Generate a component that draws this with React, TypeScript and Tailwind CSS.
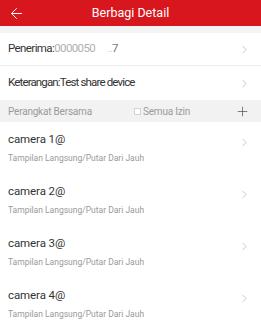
import React from 'react';
import { ChevronRight, ArrowLeft, Plus } from 'lucide-react';

const cameras = ['camera 1@', 'camera 2@', 'camera 3@', 'camera 4@'];

const Chevron = ({ className = '' }: { className?: string }) => (
  <ChevronRight size={13} strokeWidth={1.4} className={`text-[#b8b8b8] shrink-0 ${className}`} />
);

export default function App() {
  return (
    <div className="w-[261px] h-[320px] overflow-hidden bg-white" style={{ fontFamily: 'Roboto, "Noto Sans", sans-serif' }}>
      <div className="h-[26px] bg-[#d8161e] flex items-center relative">
        <ArrowLeft size={17} strokeWidth={1.4} className="text-white ml-[8px]" />
        <div className="absolute inset-0 flex items-center justify-center text-white text-[12.5px]">Berbagi Detail</div>
      </div>
      <div className="h-[7px] bg-[#f4f4f4]" />
      <div className="flex items-center justify-between h-[33px] pl-[8px] pr-[10px] border-b border-[#ececec]">
        <span className="text-[11.5px] tracking-[-0.6px] text-[#333]">
          Penerima:<span className="text-[#b0b0b0]">0000050</span>
          <span className="text-[#d0d0d0] ml-[12px]">..</span>
          <span className="text-[#777]">7</span>
        </span>
        <Chevron />
      </div>
      <div className="flex items-center justify-between h-[34px] pl-[8px] pr-[10px]">
        <span className="text-[11.5px] tracking-[-0.85px] text-[#333]">Keterangan:Test share device</span>
        <Chevron />
      </div>
      <div className="h-[22px] bg-[#f2f2f2] flex items-center pl-[8px] pr-[11px]">
        <span className="text-[10px] tracking-[-0.2px] text-[#9a9a9a] w-[126px]">Perangkat Bersama</span>
        <span className="w-[7px] h-[7px] border border-[#d4d4d4] bg-white mr-[2px]" />
        <span className="text-[10px] tracking-[-0.2px] text-[#9a9a9a]">Semua Izin</span>
        <Plus size={15} strokeWidth={1.2} className="text-[#555] ml-auto" />
      </div>
      <div className="flex flex-col">
        {cameras.map((c) => (
          <div key={c} className="flex items-start justify-between h-[52px] pt-[9px] pl-[8px] pr-[10px]">
            <div className="flex flex-col">
              <span className="text-[11.5px] tracking-[-0.1px] text-[#333] leading-[16px]">{c}</span>
              <span className="text-[8.5px] text-[#9a9a9a] leading-[11px] mt-[6px]">Tampilan Langsung/Putar Dari Jauh</span>
            </div>
            <Chevron className="mt-[5px]" />
          </div>
        ))}
      </div>
    </div>
  );
}
